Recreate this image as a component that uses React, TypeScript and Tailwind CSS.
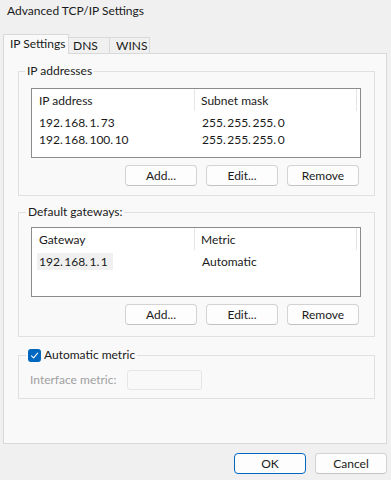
import React from 'react';

const font = { fontFamily: '"Segoe UI", Lato, "Noto Sans", sans-serif' };

const Btn = ({ label, primary }: { label: string; primary?: boolean }) => (
    <button
        className={
            'w-[72px] h-[21px] rounded-[4px] border text-[12px] leading-[19px] text-[#1b1b1b] ' +
            (primary ? 'border-[#0067c0] bg-[#fdfdfd]' : 'border-[#d3d3d3] border-b-[#c2c2c2] bg-[#fdfdfd]')
        }
    >
        {label}
    </button>
);

const ListBox = ({ head, rows, selFirst }: { head: [string, string]; rows: [string, string][]; selFirst?: boolean }) => (
    <div className="ml-[12px] w-[330px] h-[70px] border border-[#8c8c8c] bg-white">
        <div className="flex h-[22px]">
            <div className="w-[163px] pl-[7px] pt-[4px] leading-[16px] border-r border-[#e5e5e5]">{head[0]}</div>
            <div className="w-[162px] pl-[6px] pt-[4px] leading-[16px] border-r border-[#e5e5e5]">{head[1]}</div>
        </div>
        <div className="pt-[3px]">
            {rows.map(([a, b], i) => (
                <div key={i} className="flex h-[17px] leading-[17px] whitespace-nowrap">
                    <div className="w-[164px] pl-[5px]">
                        <span className={'px-[2px] inline-block ' + (selFirst && i === 0 ? 'bg-[#f0f0f0] pr-[5px]' : '')}>
                            {a.split('.').join('.\u2009')}
                        </span>
                    </div>
                    <div className="pl-[6px]">{b.split('.').join('.\u2009')}</div>
                </div>
            ))}
        </div>
    </div>
);

const Buttons = () => (
    <div className="flex gap-[9px] pl-[106px] pt-[7px]">
        <Btn label="Add..." />
        <Btn label="Edit..." />
        <Btn label="Remove" />
    </div>
);

export default function App() {
    return (
        <div className="w-[391px] h-[480px] bg-[#f0f0f0] text-[12px] text-[#1a1a1a] flex flex-col whitespace-nowrap" style={font}>
            {/* Title */}
            <div className="h-[34px] pl-[7px] pt-[3px] leading-[16px] text-[12px]">Advanced TCP/IP Settings</div>

            {/* Tabs */}
            <div className="flex items-end h-[19px] ml-[3px] relative z-10">
                <div className="w-[66px] h-[20px] -mb-[1px] bg-[#f9f9f9] border border-b-0 border-[#d9d9d9] pl-[6px] leading-[18px]">
                    IP Settings
                </div>
                <div className="w-[41px] h-[16px] bg-[#f0f0f0] border border-l-0 border-b-0 border-[#d9d9d9] pl-[4px] leading-[16px]">
                    DNS
                </div>
                <div className="w-[40px] h-[16px] bg-[#f0f0f0] border border-l-0 border-b-0 border-[#d9d9d9] pl-[6px] leading-[16px]">
                    WINS
                </div>
            </div>

            {/* Panel */}
            <div className="ml-[3px] w-[384px] h-[391px] border border-[#d9d9d9] bg-[#f9f9f9] px-[14px]">
                <fieldset className="mt-[9px] w-[357px] border border-[#e0e0e0] pt-[9px] pb-[9px]">
                    <legend className="ml-[6px] px-[2px] leading-[16px]">IP addresses</legend>
                    <ListBox
                        head={['IP address', 'Subnet mask']}
                        rows={[
                            ['192.168.1.73', '255.255.255.0'],
                            ['192.168.100.10', '255.255.255.0'],
                        ]}
                    />
                    <Buttons />
                </fieldset>

                <fieldset className="mt-[8px] w-[357px] border border-[#e0e0e0] pt-[7px] pb-[11px]">
                    <legend className="ml-[7px] px-[2px] leading-[16px]">Default gateways:</legend>
                    <ListBox head={['Gateway', 'Metric']} rows={[['192.168.1.1', 'Automatic']]} selFirst />
                    <Buttons />
                </fieldset>

                <fieldset className="mt-[10px] w-[357px] border border-[#e0e0e0] pt-[7px] pb-[8px]">
                    <legend className="ml-[7px] px-[2px] leading-[16px] flex items-center gap-[3px]">
                        <span className="w-[13px] h-[13px] rounded-[3px] bg-[#0067c0] flex items-center justify-center">
                            <svg width="9" height="9" viewBox="0 0 9 9" fill="none">
                                <path d="M1.5 4.8 L3.6 6.8 L7.6 2.2" stroke="white" strokeWidth="1.1" strokeLinecap="round" strokeLinejoin="round" />
                            </svg>
                        </span>
                        <span>Automatic metric</span>
                    </legend>
                    <div className="flex items-center pl-[11px]">
                        <span className="w-[97px] text-[#a0a0a0] leading-[16px]">Interface metric:</span>
                        <div className="w-[75px] h-[20px] border border-[#e6e6e6] rounded-[3px] bg-[#f9f9f9]" />
                    </div>
                </fieldset>
            </div>

            {/* Footer */}
            <div className="flex gap-[9px] pl-[234px] pt-[9px]">
                <Btn label="OK" primary />
                <Btn label="Cancel" />
            </div>
        </div>
    );
}
